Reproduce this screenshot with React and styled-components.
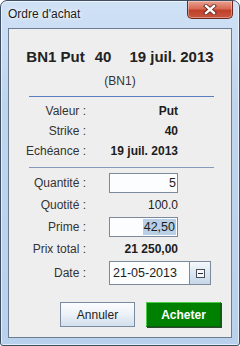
import React from "react";
import styled, { createGlobalStyle } from "styled-components";

const GlobalStyle = createGlobalStyle`
  html, body {
    margin: 0;
    padding: 0;
  }
  body {
    width: 240px;
    height: 346px;
    overflow: hidden;
    background: #ffffff;
    font-family: "Liberation Sans", Arial, sans-serif;
  }
`;

const Window = styled.div`
  box-sizing: border-box;
  width: 240px;
  height: 346px;
  display: flex;
  flex-direction: column;
  border: 1px solid #3f4f63;
  border-radius: 7px 7px 3px 3px;
  background: linear-gradient(180deg, #cfe1f5 0%, #bfd5ee 30%, #b9d1ec 100%);
  box-shadow: inset 0 0 0 1px rgba(255, 255, 255, 0.6);
  overflow: hidden;
`;

const TitleBar = styled.div`
  height: 27px;
  flex: none;
  display: flex;
  align-items: flex-start;
  justify-content: space-between;
  padding-left: 7px;
`;

const Title = styled.div`
  margin-top: 6px;
  font-size: 12px;
  line-height: 14px;
  color: #1b1b1b;
  text-shadow: 0 0 6px rgba(255, 255, 255, 0.95), 0 0 3px rgba(255, 255, 255, 0.9);
`;

const CloseButton = styled.div`
  box-sizing: border-box;
  width: 46px;
  height: 18px;
  margin-right: 6px;
  display: flex;
  align-items: center;
  justify-content: center;
  border: 1px solid #6e2a20;
  border-top: none;
  border-radius: 0 0 5px 5px;
  background: linear-gradient(180deg, #e8a290 0%, #d76a55 45%, #c0402a 55%, #c9573d 100%);
  box-shadow: inset 0 0 0 1px rgba(255, 255, 255, 0.35);
`;

const Panel = styled.div`
  flex: 1;
  margin: 0 7px 7px;
  display: flex;
  flex-direction: column;
  background: #eeeeee;
  border: 1px solid #6d7c90;
`;

const Heading = styled.div`
  margin-top: 19px;
  display: flex;
  justify-content: center;
  font-size: 15px;
  line-height: 18px;
  font-weight: bold;
  color: #222;
  white-space: nowrap;
`;

const HeadPart = styled.span`
  margin-left: ${({ $gap }) => $gap || 0}px;
`;

const SubHeading = styled.div`
  margin-top: 7px;
  text-align: center;
  font-size: 12px;
  line-height: 16px;
  color: #333;
`;

const Rule = styled.div`
  height: 1px;
  width: 185px;
  margin: ${({ $top }) => $top}px 0 0 20px;
  background: ${({ $color }) => $color};
`;

const Group = styled.div`
  margin-top: 4px;
  display: flex;
  flex-direction: column;
`;

const Row = styled.div`
  height: ${({ $h }) => $h}px;
  display: flex;
  align-items: center;
`;

const Label = styled.div`
  width: 77px;
  margin-right: 23px;
  text-align: right;
  font-size: 12px;
  line-height: 16px;
  color: #333;
`;

const Value = styled.div`
  width: 69px;
  text-align: right;
  font-size: 12px;
  line-height: 16px;
  color: #1c1c1c;
  font-weight: ${({ $bold }) => ($bold ? "bold" : "normal")};
`;

const Field = styled.div`
  box-sizing: border-box;
  width: ${({ $w }) => $w}px;
  height: ${({ $h }) => $h}px;
  padding: 0 ${({ $left }) => ($left ? 0 : 1)}px 0 ${({ $left }) => ($left ? 3 : 0)}px;
  display: flex;
  align-items: center;
  justify-content: ${({ $left }) => ($left ? "flex-start" : "flex-end")};
  border: 1px solid #7b899b;
  background: #fcfdff;
  font-size: 12.5px;
  line-height: 16px;
  color: #1c1c1c;
`;

const Selected = styled.span`
  display: inline-block;
  height: 16px;
  padding: 0 1px;
  background: #b8cfe5;
`;

const DateButton = styled.div`
  box-sizing: border-box;
  width: 21px;
  height: 24px;
  display: flex;
  align-items: center;
  justify-content: center;
  border: 1px solid #7b899b;
  border-left: none;
  background: linear-gradient(180deg, #f4f8fc 0%, #dce7f2 50%, #c7d7e9 100%);
`;

const ButtonRow = styled.div`
  margin-top: 16px;
  padding-right: 10px;
  display: flex;
  justify-content: flex-end;
  gap: 11px;
`;

const Button = styled.div`
  box-sizing: border-box;
  width: 75px;
  height: 25px;
  display: flex;
  align-items: center;
  justify-content: center;
  font-size: 12px;
  ${({ $primary }) =>
    $primary
      ? `
    background: #008000;
    color: #ffffff;
    font-weight: bold;
    border: 1px solid;
    border-color: #4ccc4c #0b5e0b #0b5e0b #4ccc4c;
    box-shadow: 1px 1px 0 #2e4a2e;
  `
      : `
    background: linear-gradient(180deg, #fbfcfe 0%, #eef3f9 45%, #d2dfed 100%);
    color: #222;
    border: 1px solid #7a8aa0;
  `}
`;

const CloseIcon = () => (
  <svg width="14" height="11" viewBox="0 0 14 11">
    <path d="M3 2 L11 9 M11 2 L3 9" stroke="#5a2018" strokeWidth="4" strokeLinecap="square" fill="none" />
    <path d="M3 2 L11 9 M11 2 L3 9" stroke="#ffffff" strokeWidth="2.4" strokeLinecap="square" fill="none" />
  </svg>
);

const CollapseIcon = () => (
  <svg width="9" height="9" viewBox="0 0 9 9">
    <rect x="0.5" y="0.5" width="8" height="8" fill="#f6f8fb" stroke="#4a4f57" />
    <path d="M2 4.5 H7" stroke="#2a2d33" strokeWidth="1" />
  </svg>
);

const details = [
  { label: "Valeur :", value: "Put" },
  { label: "Strike :", value: "40" },
  { label: "Echéance :", value: "19 juil. 2013" },
];

export default function App() {
  return (
    <>
      <GlobalStyle />
      <Window>
        <TitleBar>
          <Title>Ordre d'achat</Title>
          <CloseButton>
            <CloseIcon />
          </CloseButton>
        </TitleBar>
        <Panel>
          <Heading>
            <HeadPart>BN1 Put</HeadPart>
            <HeadPart $gap={10}>40</HeadPart>
            <HeadPart $gap={18}>19 juil. 2013</HeadPart>
          </Heading>
          <SubHeading>(BN1)</SubHeading>
          <Rule $top={7} $color="#5b7ec0" />

          <Group>
            {details.map((d) => (
              <Row key={d.label} $h={20}>
                <Label>{d.label}</Label>
                <Value $bold>{d.value}</Value>
              </Row>
            ))}
          </Group>

          <Rule $top={6} $color="#8799ba" />

          <Group>
            <Row $h={22}>
              <Label>Quantité :</Label>
              <Field $w={69} $h={20}>5</Field>
            </Row>
            <Row $h={22}>
              <Label>Quotité :</Label>
              <Value>100.0</Value>
            </Row>
            <Row $h={22}>
              <Label>Prime :</Label>
              <Field $w={69} $h={20}>
                <Selected>42,50</Selected>
              </Field>
            </Row>
            <Row $h={22}>
              <Label>Prix total :</Label>
              <Value $bold>21 250,00</Value>
            </Row>
            <Row $h={26}>
              <Label>Date :</Label>
              <Field $w={81} $h={24} $left>21-05-2013</Field>
              <DateButton>
                <CollapseIcon />
              </DateButton>
            </Row>
          </Group>

          <ButtonRow>
            <Button>Annuler</Button>
            <Button $primary>Acheter</Button>
          </ButtonRow>
        </Panel>
      </Window>
    </>
  );
}
